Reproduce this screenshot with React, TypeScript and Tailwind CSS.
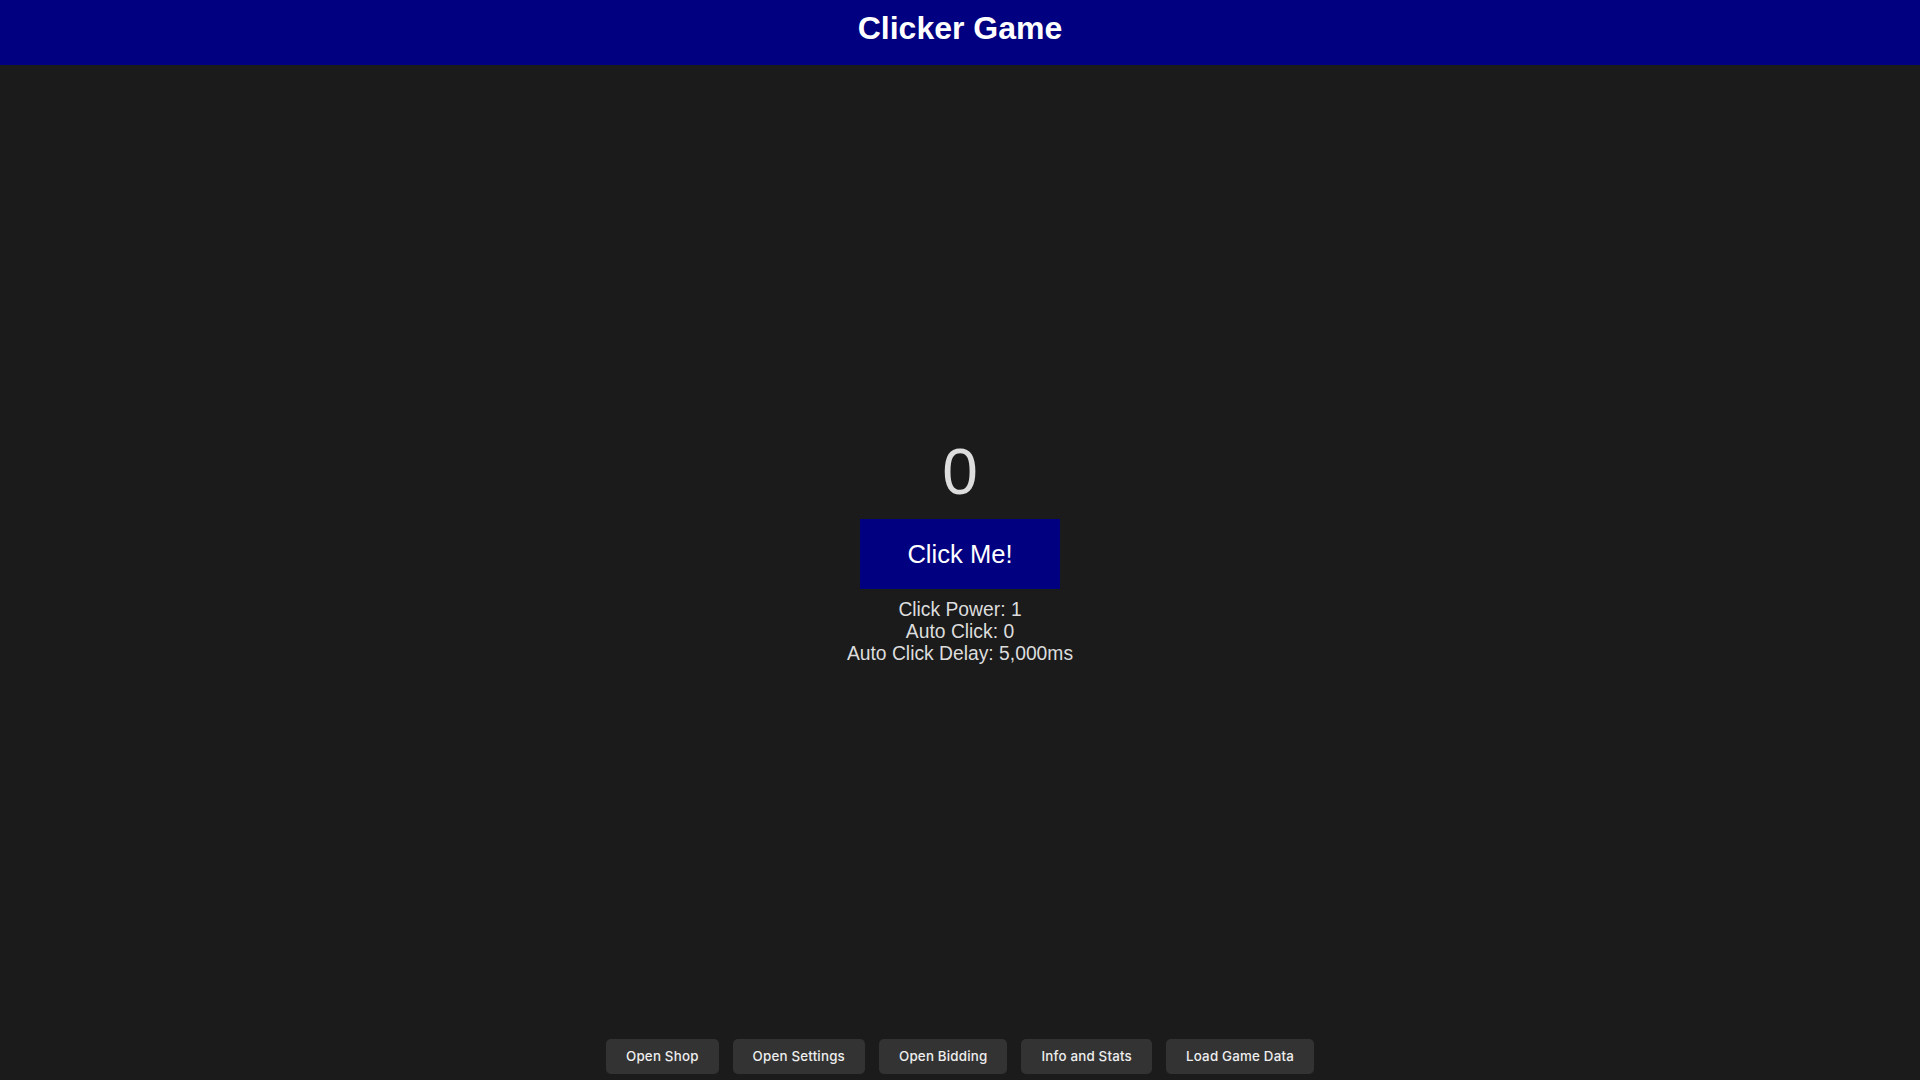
import { useEffect, useState } from "react";

const buttons = [
  "Open Shop",
  "Open Settings",
  "Open Bidding",
  "Info and Stats",
  "Load Game Data",
];

export default function App() {
  const [count, setCount] = useState(0);
  const clickPower = 1;
  const autoClick = 0;
  const delay = 5000;

  useEffect(() => {
    if (autoClick <= 0) return;
    const id = setInterval(() => setCount((c) => c + autoClick), delay);
    return () => clearInterval(id);
  }, []);

  return (
    <div className="flex flex-col h-screen w-full bg-[#1b1b1b] text-[#dddddd] font-['Liberation_Sans',Arial,sans-serif]">
      {/* header */}
      <header className="h-[65px] shrink-0 bg-[#000080] flex justify-center pt-[10px]">
        <h1 className="text-[32px] font-bold text-white leading-[37px]">Clicker Game</h1>
      </header>

      {/* main */}
      <main className="flex-1 flex flex-col items-center justify-center">
        <div className="text-[64px] leading-[70px] text-[#dddddd]">{count.toLocaleString("en-US")}</div>
        <button
          onClick={() => setCount((c) => c + clickPower)}
          className="mt-[12px] w-[200px] h-[70px] bg-[#000080] text-white text-[25.6px]"
        >
          Click Me!
        </button>
        <div className="mt-[10px] flex flex-col items-center text-[19.3px] leading-[22px]">
          <p>Click Power: {clickPower}</p>
          <p>Auto Click: {autoClick}</p>
          <p>Auto Click Delay: {delay.toLocaleString("en-US")}ms</p>
        </div>
      </main>

      {/* bottom bar */}
      <footer className="shrink-0 flex justify-center gap-[14px] pt-[2px] pb-[6px] font-['Inter',sans-serif]">
        {buttons.map((b) => (
          <button
            key={b}
            className="h-[35px] px-[20px] rounded-[5px] bg-[#333333] text-[13.33px] tracking-[0.2px] font-medium text-[#eeeeee]"
          >
            {b}
          </button>
        ))}
      </footer>
    </div>
  );
}
